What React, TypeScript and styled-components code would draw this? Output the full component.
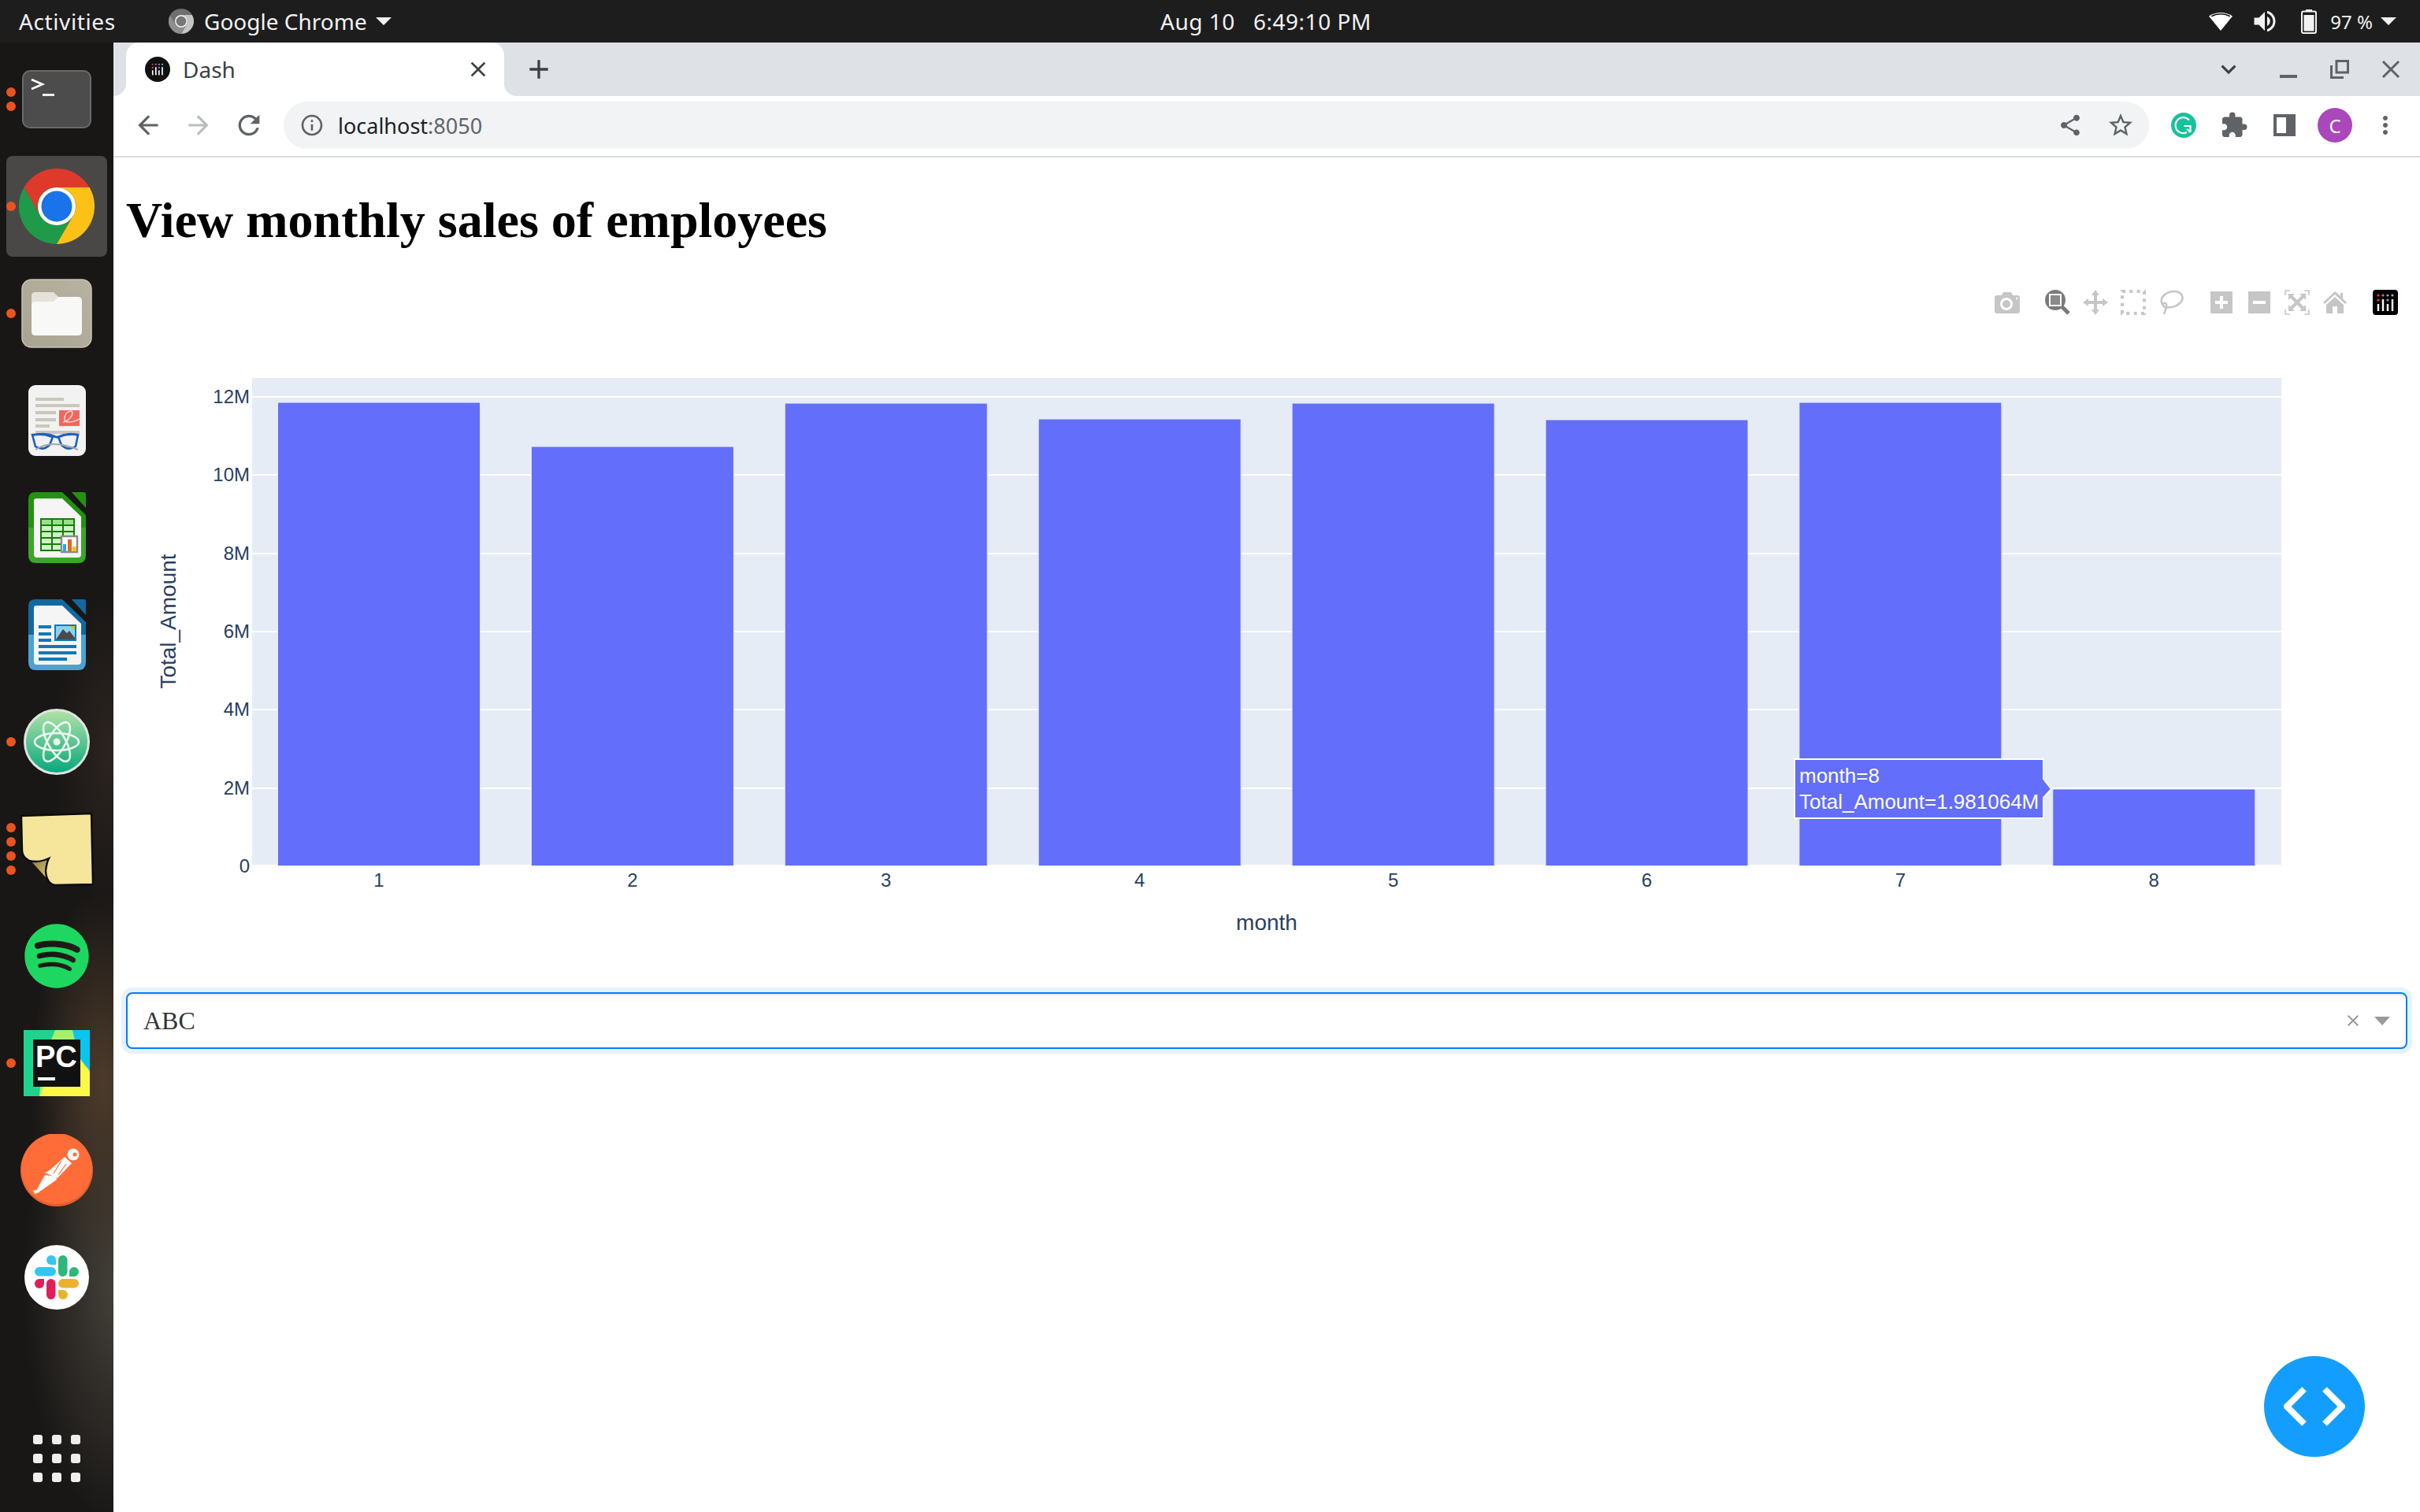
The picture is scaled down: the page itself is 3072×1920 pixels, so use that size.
import styled, { createGlobalStyle } from "styled-components";
import {
  MdAdd,
  MdArrowBack,
  MdArrowForward,
  MdClose,
  MdExtension,
  MdInfoOutline,
  MdKeyboardArrowDown,
  MdMoreVert,
  MdRefresh,
  MdShare,
  MdStarBorder,
  MdVolumeUp,
} from "react-icons/md";
import { FaSpotify } from "react-icons/fa";

const UI_FONT = '"Noto Sans", "Open Sans", sans-serif';
const PLOT_FONT = '"Liberation Sans", Arial, sans-serif';

const GlobalStyle = createGlobalStyle`
  html, body {
    margin: 0;
    padding: 0;
    background: #fff;
  }
  body {
    width: 3072px;
    height: 1920px;
    overflow: hidden;
    font-family: "Liberation Serif", serif;
  }
`;

const Screen = styled.div`
  position: relative;
  width: 3072px;
  height: 1920px;
  display: flex;
  flex-direction: column;
  overflow: hidden;
`;

/* ---------- gnome top bar ---------- */
const TopBar = styled.header`
  height: 54px;
  flex: none;
  display: grid;
  grid-template-columns: 214px 1259px 1fr;
  align-items: center;
  background: #1d1d1d;
  color: #f2f2f2;
  font-family: ${UI_FONT};
  font-size: 28px;
`;
const Activities = styled.div`
  padding-left: 24px;
  letter-spacing: 0.6px;
`;
const AppMenu = styled.div`
  display: flex;
  align-items: center;
  gap: 13px;
`;
const Caret = styled.span<{ $size: number }>`
  width: 0;
  height: 0;
  border-left: ${(p) => p.$size}px solid transparent;
  border-right: ${(p) => p.$size}px solid transparent;
  border-top: ${(p) => p.$size}px solid #f2f2f2;
  margin-left: -2px;
`;
const StatusRow = styled.div`
  display: flex;
  align-items: center;
`;
const Clock = styled.div`
  white-space: pre;
  letter-spacing: 0.5px;
`;
const Tray = styled.div`
  margin-left: auto;
  padding-right: 30px;
  display: flex;
  align-items: center;
`;
const TraySlot = styled.span<{ $gap: number }>`
  display: flex;
  margin-left: ${(p) => p.$gap}px;
`;
const Percent = styled.span`
  font-size: 24px;
  margin: 0 12px 0 17px;
`;

/* ---------- desktop ---------- */
const Desktop = styled.div`
  flex: 1;
  display: flex;
  min-height: 0;
`;
const Dock = styled.aside`
  width: 144px;
  flex: none;
  display: flex;
  flex-direction: column;
  padding: 4px 0 38px;
  box-sizing: border-box;
  background:
    radial-gradient(ellipse 90px 240px at 130px 1320px, #4d3b2b 0%, rgba(77, 59, 43, 0) 100%),
    radial-gradient(ellipse 120px 300px at 150px 1580px, #45413a 0%, rgba(69, 65, 58, 0) 100%),
    radial-gradient(ellipse 70px 200px at 140px 900px, #2c2420 0%, rgba(44, 36, 32, 0) 100%),
    #191716;
`;
const DockItem = styled.div<{ $active?: boolean }>`
  position: relative;
  height: 136px;
  flex: none;
  display: flex;
  align-items: center;
  justify-content: center;
  &::before {
    content: "";
    display: ${(p) => (p.$active ? "block" : "none")};
    position: absolute;
    left: 8px;
    right: 8px;
    top: 4px;
    bottom: 4px;
    border-radius: 8px;
    background: #4a4846;
  }
  svg {
    position: relative;
  }
`;
const RunningDots = styled.div`
  position: absolute;
  left: 8px;
  top: 0;
  bottom: 0;
  display: flex;
  flex-direction: column;
  justify-content: center;
  gap: 6px;
`;
const RunningDot = styled.span`
  width: 12px;
  height: 12px;
  border-radius: 50%;
  background: #e95420;
`;
const AppGrid = styled.div`
  margin-top: auto;
  align-self: center;
  display: grid;
  grid-template-columns: repeat(3, 12px);
  gap: 12px;
`;
const AppGridDot = styled.span`
  height: 12px;
  border-radius: 3px;
  background: #eeeeee;
`;

/* ---------- chrome ---------- */
const Browser = styled.main`
  flex: 1;
  min-width: 0;
  display: flex;
  flex-direction: column;
  background: #fff;
`;
const TabStrip = styled.div`
  height: 68px;
  flex: none;
  display: flex;
  align-items: center;
  padding-left: 16px;
  background: #dee1e6;
`;
const Tab = styled.div`
  position: relative;
  width: 480px;
  height: 68px;
  box-sizing: border-box;
  display: flex;
  align-items: center;
  padding: 0 17px 0 24px;
  gap: 16px;
  background: #fff;
  border-radius: 16px 16px 0 0;
  color: #3c4043;
  font-family: ${UI_FONT};
  font-size: 28px;
  &::before,
  &::after {
    content: "";
    position: absolute;
    bottom: 0;
    width: 16px;
    height: 16px;
  }
  &::before {
    left: -16px;
    background: radial-gradient(circle at 0 0, #dee1e6 15.5px, #fff 16.5px);
  }
  &::after {
    right: -16px;
    background: radial-gradient(circle at 100% 0, #dee1e6 15.5px, #fff 16.5px);
  }
`;
const TabClose = styled.span`
  margin-left: auto;
  display: flex;
  color: #3c4043;
`;
const NewTab = styled.span`
  margin-left: 24px;
  display: flex;
  color: #3c4043;
`;
const WindowControls = styled.div`
  margin-left: auto;
  padding-right: 5px;
  display: flex;
  align-items: center;
`;
const WindowButton = styled.span<{ $gapRight?: number }>`
  width: 65px;
  height: 68px;
  margin-right: ${(p) => p.$gapRight ?? 0}px;
  display: flex;
  align-items: center;
  justify-content: center;
  color: #5f6368;
`;
const MinimizeBar = styled.span`
  width: 22px;
  height: 4px;
  margin-top: 18px;
  background: #5f6368;
`;
const Toolbar = styled.div`
  height: 78px;
  flex: none;
  box-sizing: border-box;
  display: flex;
  align-items: center;
  padding: 0 0 2px 12px;
  background: #fff;
  border-bottom: 2px solid #dadce0;
`;
const NavButton = styled.span<{ $dim?: boolean }>`
  width: 64px;
  height: 60px;
  flex: none;
  display: flex;
  align-items: center;
  justify-content: center;
  color: ${(p) => (p.$dim ? "#babcbe" : "#5f6368")};
`;
const Omnibox = styled.div`
  width: 2368px;
  height: 60px;
  flex: none;
  margin: 0 12px;
  box-sizing: border-box;
  display: flex;
  align-items: center;
  padding: 0 4px 0 20px;
  border-radius: 30px;
  background: #f1f3f4;
  font-family: ${UI_FONT};
  font-size: 27px;
  color: #202124;
`;
const InfoIcon = styled.span`
  display: flex;
  color: #5f6368;
  margin-right: 17px;
`;
const Port = styled.span`
  color: #5f6368;
`;
const Url = styled.div`
  flex: 1;
`;
const Avatar = styled.span`
  width: 44px;
  height: 44px;
  border-radius: 50%;
  background: #ab47bc;
  color: #fff;
  font-family: ${UI_FONT};
  font-size: 24px;
  display: flex;
  align-items: center;
  justify-content: center;
`;
const SidePanel = styled.span`
  width: 28px;
  height: 28px;
  box-sizing: border-box;
  border: 4px solid #5f6368;
  border-right-width: 12px;
  background: #fff;
`;

/* ---------- page ---------- */
const Page = styled.section`
  flex: 1;
  padding: 0 16px;
`;
const Title = styled.h1`
  margin: 43px 0;
  font-family: "Liberation Serif", serif;
  font-size: 64px;
  font-weight: 700;
  color: #000;
`;
const Graph = styled.div`
  position: relative;
  height: 900px;
  svg.plot {
    display: block;
  }
`;
const ModeBar = styled.div`
  position: absolute;
  top: 8px;
  right: 4px;
  display: flex;
  gap: 16px;
`;
const ModeGroup = styled.div`
  display: flex;
`;
const ModeButton = styled.span`
  width: 48px;
  height: 32px;
  display: flex;
  align-items: center;
  justify-content: center;
`;
const Dropdown = styled.div`
  height: 72px;
  box-sizing: border-box;
  display: flex;
  align-items: center;
  padding: 0 20px;
  border: 2px solid #007eff;
  border-radius: 8px;
  box-shadow: inset 0 2px 2px rgba(0, 0, 0, 0.075), 0 0 0 6px rgba(0, 126, 255, 0.1);
  font-family: "Liberation Serif", serif;
  font-size: 32px;
  color: #333;
`;
const DropdownValue = styled.span`
  flex: 1;
`;
const ClearMark = styled.span`
  display: flex;
  color: #999;
  margin-right: 15px;
`;
const DropdownCaret = styled.span`
  width: 0;
  height: 0;
  border-left: 10px solid transparent;
  border-right: 10px solid transparent;
  border-top: 11px solid #999;
`;
const CodeFab = styled.div`
  position: absolute;
  left: 2874px;
  top: 1722px;
  width: 128px;
  height: 128px;
  border-radius: 50%;
  background: #139eff;
  display: flex;
  align-items: center;
  justify-content: center;
`;

/* ---------- icons ---------- */
function ChromeLogo({ size, colors }: { size: number; colors: [string, string, string, string] }) {
  return (
    <svg width={size} height={size} viewBox="0 0 96 96">
      <path d="M48 0A48 48 0 0 1 89.6 24L48 24A24 24 0 0 0 27.2 60L6.4 24A48 48 0 0 1 48 0Z" fill={colors[0]} />
      <path d="M6.4 24L27.2 60A24 24 0 0 0 68.8 60L48 96A48 48 0 0 1 6.4 24Z" fill={colors[1]} />
      <path d="M89.6 24A48 48 0 0 1 48 96L68.8 60A24 24 0 0 0 48 24Z" fill={colors[2]} />
      <circle cx="48" cy="48" r="24" fill="#fff" />
      <circle cx="48" cy="48" r="19.5" fill={colors[3]} />
    </svg>
  );
}

function PlotlyMarks() {
  const dots: [number, number, string][] = [
    [7, 7, "#ff2d6f"],
    [13, 7, "#c86ea5"],
    [19, 7, "#a98ccf"],
    [25, 7, "#5ecae9"],
    [7, 13, "#ff2d6f"],
    [19, 13, "#a98ccf"],
  ];
  return (
    <>
      {dots.map(([x, y, c]) => (
        <circle key={`${x}-${y}`} cx={x} cy={y} r="1.6" fill={c} />
      ))}
      <rect x="5.8" y="18" width="2.4" height="9" fill="#fff" />
      <rect x="11.8" y="12" width="2.4" height="15" fill="#fff" />
      <rect x="17.8" y="18" width="2.4" height="9" fill="#fff" />
      <rect x="23.8" y="12" width="2.4" height="15" fill="#fff" />
    </>
  );
}

function Favicon() {
  return (
    <svg width="32" height="32" viewBox="0 0 32 32">
      <circle cx="16" cy="16" r="16" fill="#111" />
      <g transform="translate(5 5) scale(.68)">
        <PlotlyMarks />
      </g>
    </svg>
  );
}

function WifiIcon() {
  return (
    <svg width="32" height="26" viewBox="0 0 32 26">
      <path d="M16 25L1 6.5C9.5 .5 22.5 .5 31 6.5Z" fill="#fff" />
      <path d="M4.2 6.8C11 2.8 21 2.8 27.8 6.8" fill="none" stroke="#1d1d1d" strokeWidth="1.6" />
    </svg>
  );
}

function BatteryIcon() {
  return (
    <svg width="20" height="31" viewBox="0 0 20 31">
      <rect x="6" y="0" width="8" height="3" fill="#eee" />
      <rect x="1" y="2.5" width="18" height="27.5" rx="2" fill="none" stroke="#f2f2f2" strokeWidth="2" />
      <rect x="3.5" y="7" width="13" height="20.5" fill="#f2f2f2" />
    </svg>
  );
}

function GrammarlyIcon() {
  return (
    <svg width="32" height="32" viewBox="0 0 32 32">
      <circle cx="16" cy="16" r="16" fill="#15c39a" />
      <path d="M23 9.5A10 10 0 1 0 20 25" fill="none" stroke="#fff" strokeWidth="2.2" />
      <path d="M16.5 17H24.5V25M24.5 25L20 20.8" fill="none" stroke="#fff" strokeWidth="2.2" />
    </svg>
  );
}

function TerminalIcon() {
  return (
    <svg width="88" height="74" viewBox="0 0 88 74">
      <rect x="1" y="1" width="86" height="72" rx="9" fill="#4c4c4c" stroke="#6a6a6a" strokeWidth="2" />
      <path d="M12 12L26 18L12 24" fill="none" stroke="#fff" strokeWidth="2.6" />
      <rect x="26" y="30" width="15" height="3" fill="#eee" />
    </svg>
  );
}

function FolderIcon() {
  return (
    <svg width="90" height="88" viewBox="0 0 90 88">
      <defs>
        <linearGradient id="folderBg" x1="0" y1="1" x2="1" y2="0">
          <stop offset="0" stopColor="#a9a391" />
          <stop offset="1" stopColor="#b8b2a2" />
        </linearGradient>
      </defs>
      <rect x="1" y="1" width="88" height="86" rx="12" fill="url(#folderBg)" stroke="#c8c3b6" strokeWidth="1.5" />
      <path d="M13 22Q13 17 18 17H41L47 23H60V40H13Z" fill="#e6e2d8" />
      <path d="M13 34Q13 29 18 29H41L47 23H72Q77 23 77 28V67Q77 72 72 72H18Q13 72 13 67Z" fill="#f8f8f7" />
    </svg>
  );
}

function EvinceIcon() {
  return (
    <svg width="73" height="90" viewBox="0 0 73 90">
      <rect x="0" y="0" width="73" height="90" rx="9" fill="#f2f2f2" />
      <g fill="#cbc7ba">
        <rect x="9" y="16" width="36" height="4" />
        <rect x="9" y="24" width="56" height="4" />
        <rect x="9" y="33" width="26" height="4" />
        <rect x="9" y="42" width="26" height="4" />
        <rect x="9" y="50" width="18" height="4" />
        <rect x="9" y="58" width="56" height="4" />
      </g>
      <rect x="39" y="32" width="26" height="20" fill="#f4665c" />
      <path d="M44 47C52 46 60 34 54 33C47 33 42 46 50 47C55 47 60 46 65 43" fill="none" stroke="#fff" strokeWidth="1.2" />
      <path d="M6 64C16 61 28 62 35 66H38C45 62 57 61 63 64" fill="none" stroke="#1f5fbf" strokeWidth="3" />
      <path d="M5 63L9 78Q19 84 27 76L31 66Q18 61 5 63ZM38 66L42 76Q50 84 60 78L63 63Q50 61 38 66Z" fill="#eef0f2" fillOpacity=".55" stroke="#1f5fbf" strokeWidth="2.6" />
      <path d="M9 82Q30 68 63 82" fill="none" stroke="#a8a8a8" strokeWidth="2" />
    </svg>
  );
}

function OfficeDoc({ id, dark, light, children }: { id: string; dark: string; light: string; children: React.ReactNode }) {
  return (
    <svg width="73" height="90" viewBox="0 0 73 90">
      <defs>
        <linearGradient id={id} x1="0" y1="0" x2="0" y2="1">
          <stop offset=".5" stopColor={dark} />
          <stop offset=".5" stopColor={light} />
        </linearGradient>
      </defs>
      <path d="M9 0H43L73 29V80Q73 90 63 90H10Q0 90 0 80V9Q0 0 9 0Z" fill={`url(#${id})`} />
      <path d="M55 0H70Q73 0 73 3V20Z" fill={dark} />
      <path d="M10 8H43L67 31V79Q67 83 63 83H11Q7 83 7 79V11Q7 8 10 8Z" fill="#f5f5f5" />
      {children}
    </svg>
  );
}

function CalcIcon() {
  const rows = [0, 1, 2, 3, 4];
  const cols = [0, 1, 2];
  return (
    <OfficeDoc id="calcDoc" dark="#23930f" light="#3aa62a">
      <rect x="15" y="33" width="44" height="42" fill="#1a7a0d" />
      {rows.map((r) =>
        cols.map((c) => (
          <rect
            key={`${r}-${c}`}
            x={17 + c * 14}
            y={35 + r * 8}
            width="12"
            height="6"
            fill={r === 0 ? "#97e286" : "#cdf4c4"}
          />
        )),
      )}
      <rect x="42" y="56" width="20" height="20" fill="#fff" stroke="#8a8a8a" strokeWidth="2.4" />
      <rect x="44" y="66" width="4" height="9" fill="#2aa5ee" />
      <rect x="50" y="60" width="5" height="15" fill="#dd6a20" />
      <rect x="56" y="69" width="5" height="6" fill="#f2c21b" />
    </OfficeDoc>
  );
}

function WriterIcon() {
  return (
    <OfficeDoc id="writerDoc" dark="#12699f" light="#4aa3d2">
      <g fill="#1278b5">
        <rect x="13" y="33" width="16" height="4" />
        <rect x="13" y="42" width="16" height="4" />
        <rect x="13" y="50" width="16" height="4" />
        <rect x="13" y="58" width="48" height="4" />
        <rect x="13" y="66" width="48" height="4" />
        <rect x="13" y="74" width="36" height="4" />
      </g>
      <rect x="33" y="32" width="28" height="21" fill="#1278b5" />
      <rect x="35" y="34" width="24" height="17" fill="#8fd0ee" />
      <path d="M35 51L44 38L49 43L52 40L59 49V51Z" fill="#4b4b4b" />
      <path d="M53 34H59V40Z" fill="#eab80f" />
    </OfficeDoc>
  );
}

function AtomIcon() {
  const spins = [0, 60, 120];
  return (
    <svg width="84" height="84" viewBox="0 0 84 84">
      <defs>
        <linearGradient id="atomBg" x1="0" y1="0" x2="0" y2="1">
          <stop offset="0" stopColor="#b4e2a8" />
          <stop offset="1" stopColor="#03a87c" />
        </linearGradient>
      </defs>
      <circle cx="42" cy="42" r="40.5" fill="url(#atomBg)" stroke="#dfe4e0" strokeWidth="3" />
      {spins.map((a) => (
        <ellipse key={a} cx="42" cy="42" rx="28" ry="11" fill="none" stroke="#e9f7ee" strokeWidth="2.6" transform={`rotate(${a} 42 42)`} />
      ))}
      <circle cx="42" cy="42" r="4.5" fill="#e9f7ee" />
    </svg>
  );
}

function StickyIcon() {
  return (
    <svg width="94" height="93" viewBox="0 0 94 93">
      <defs>
        <linearGradient id="stickyFold" x1="0" y1="0" x2="1" y2="1">
          <stop offset="0" stopColor="#8a7a3a" />
          <stop offset="1" stopColor="#d8c471" />
        </linearGradient>
      </defs>
      <path d="M14 61L36 58L33 82Z" fill="url(#stickyFold)" />
      <path
        d="M2 4L91 1L93 91L45 92Q34 90 33 74Q34 64 37 58Q24 64 12 61Q3 56 3 48Z"
        fill="#f5e69b"
        stroke="#0c0c0c"
        strokeWidth="2.4"
      />
    </svg>
  );
}

function SpotifyIcon() {
  return <FaSpotify size={84} color="#1ed760" />;
}

function PyCharmIcon() {
  return (
    <svg width="84" height="84" viewBox="0 0 84 84">
      <rect width="84" height="84" fill="#1fd38f" />
      <path d="M40 0H64L74 40L60 84H20L24 40Z" fill="#a6ef6c" />
      <path d="M62 0H84V52L70 34Z" fill="#0bc5ee" />
      <path d="M20 84L26 72L66 30L84 52V84Z" fill="#fbf847" />
      <rect x="12" y="12" width="60" height="60" fill="#111" />
      <text x="15" y="47" fontFamily={PLOT_FONT} fontWeight="700" fontSize="38" fill="#fff">
        PC
      </text>
      <rect x="18" y="60" width="22" height="4" fill="#fff" />
    </svg>
  );
}

function PostmanIcon() {
  return (
    <svg width="92" height="92" viewBox="0 0 92 92">
      <circle cx="46" cy="46" r="46" fill="#e55f2f" />
      <circle cx="46" cy="44" r="45" fill="#ff6c37" />
      <circle cx="67" cy="26" r="7.5" fill="#fff" />
      <circle cx="69" cy="26" r="2.5" fill="#ff6c37" />
      <path d="M56 29L65 37L47 56L31 49L37 46Z" fill="#fff" />
      <path d="M31 52L45 54L46 58L26 72L20 72Z" fill="#fff" />
      <path d="M16 72L26 70L24 74L18 76Z" fill="#fff" />
      <path d="M52 34L42 50M58 38L48 52" stroke="#ff6c37" strokeWidth="1.2" />
    </svg>
  );
}

function SlackIcon() {
  return (
    <svg width="82" height="82" viewBox="0 0 82 82">
      <circle cx="41" cy="41" r="41" fill="#fff" />
      <rect x="13" y="28" width="27" height="11.5" rx="5.75" fill="#36c5f0" />
      <path d="M40 25H34A6 6 0 1 1 40 19Z" fill="#36c5f0" />
      <rect x="43" y="13" width="11.5" height="27" rx="5.75" fill="#2eb67d" />
      <path d="M57 40V34A6 6 0 1 1 63 40Z" fill="#2eb67d" />
      <rect x="28" y="43" width="11.5" height="26" rx="5.75" fill="#e01e5a" />
      <path d="M25 43V49A6 6 0 1 1 19 43Z" fill="#e01e5a" />
      <rect x="43" y="43" width="26" height="11.5" rx="5.75" fill="#ecb22e" />
      <path d="M43 57H49A6 6 0 1 1 43 63Z" fill="#ecb22e" />
    </svg>
  );
}

const MODE_ICON = "#c6c6c6";

function CameraIcon() {
  return (
    <svg width="32" height="28" viewBox="0 0 32 28">
      <path d="M3 5H9L11 1H21L23 5H29Q32 5 32 8V25Q32 28 29 28H3Q0 28 0 25V8Q0 5 3 5Z" fill={MODE_ICON} />
      <circle cx="15" cy="16" r="6.5" fill="none" stroke="#fff" strokeWidth="3" />
      <circle cx="28" cy="9" r="1.2" fill="#fff" />
    </svg>
  );
}
function ZoomIcon() {
  return (
    <svg width="32" height="32" viewBox="0 0 32 32">
      <circle cx="13" cy="13" r="13" fill="#7a7a7a" />
      <rect x="6" y="6" width="14" height="14" fill="#8a8a8a" stroke="#fff" strokeWidth="2" />
      <path d="M21 21L30 30" stroke="#7a7a7a" strokeWidth="5" />
    </svg>
  );
}
function PanIcon() {
  return (
    <svg width="32" height="32" viewBox="0 0 32 32">
      <path d="M16 0L21 7H18V14H25V11L32 16L25 21V18H18V25H21L16 32L11 25H14V18H7V21L0 16L7 11V14H14V7H11Z" fill={MODE_ICON} />
    </svg>
  );
}
function SelectIcon() {
  return (
    <svg width="32" height="32" viewBox="0 0 32 32">
      <rect x="2" y="2" width="28" height="28" fill="none" stroke={MODE_ICON} strokeWidth="4" strokeDasharray="4 5.33" />
    </svg>
  );
}
function LassoIcon() {
  return (
    <svg width="32" height="32" viewBox="0 0 32 32">
      <path d="M6 20C-1 10 10 2 20 2C28 2 32 8 30 13C27 20 16 24 8 22C4 20 6 16 9 17C12 19 9 26 7 31" fill="none" stroke={MODE_ICON} strokeWidth="2.6" />
    </svg>
  );
}
function BoxIcon({ plus }: { plus?: boolean }) {
  return (
    <svg width="28" height="28" viewBox="0 0 28 28">
      <rect width="28" height="28" fill={MODE_ICON} />
      <rect x="6" y="12" width="16" height="4" fill="#fff" />
      {plus && <rect x="12" y="6" width="4" height="16" fill="#fff" />}
    </svg>
  );
}
function AutoscaleIcon() {
  return (
    <svg width="32" height="32" viewBox="0 0 32 32">
      <path d="M1 7V1H7M25 1H31V7M31 25V31H25M7 31H1V25" fill="none" stroke={MODE_ICON} strokeWidth="1.6" />
      <path d="M7 7L25 25M25 7L7 25" stroke={MODE_ICON} strokeWidth="4" />
      <path d="M5 5H13L5 13ZM27 5V13L19 5ZM27 27H19L27 19ZM5 27V19L13 27Z" fill={MODE_ICON} />
    </svg>
  );
}
function HomeIcon() {
  return (
    <svg width="30" height="28" viewBox="0 0 30 28">
      <path d="M15 0L22 6V2H25V9L30 14L28 16L15 4L2 16L0 14Z" fill={MODE_ICON} />
      <path d="M15 7L26 17V28H18V19H12V28H4V17Z" fill={MODE_ICON} />
    </svg>
  );
}
function PlotlyLogo() {
  return (
    <svg width="32" height="32" viewBox="0 0 32 32">
      <rect width="32" height="32" rx="4" fill="#000" />
      <PlotlyMarks />
    </svg>
  );
}

/* ---------- chart ---------- */
const plot = { left: 320, right: 2896, top: 480, bottom: 1099 };
const barTops = [511, 567, 512, 532, 512, 533, 511, 1002];
const yTicks = [
  { label: "12M", y: 504 },
  { label: "10M", y: 603 },
  { label: "8M", y: 703 },
  { label: "6M", y: 802 },
  { label: "4M", y: 901 },
  { label: "2M", y: 1001 },
];
const AXIS_COLOR = "#2a3f5f";

function BarChart() {
  return (
    <svg className="plot" width="2896" height="900" viewBox="160 360 2896 900" fontFamily={PLOT_FONT}>
      <rect x={plot.left} y={plot.top} width={plot.right - plot.left} height={plot.bottom - plot.top} fill="#e5ecf6" />
      {yTicks.map((t) => (
        <g key={t.label}>
          <rect x={plot.left} y={t.y - 1} width={plot.right - plot.left} height="2" fill="#fff" />
          <text x="317" y={t.y + 8} textAnchor="end" fontSize="24" fill={AXIS_COLOR}>
            {t.label}
          </text>
        </g>
      ))}
      <rect x={plot.left} y={plot.bottom - 1} width={plot.right - plot.left} height="3" fill="#fff" />
      <text x="317" y="1108" textAnchor="end" fontSize="24" fill={AXIS_COLOR}>
        0
      </text>
      {barTops.map((top, i) => {
        const x = 352.5 + i * 321.9;
        return (
          <g key={i}>
            <rect x={x} y={top} width="257" height={plot.bottom + 0.5 - top} fill="#636efa" stroke="#e5ecf6" strokeWidth="1" />
            <text x={x + 128.5} y="1126" textAnchor="middle" fontSize="24" fill={AXIS_COLOR}>
              {i + 1}
            </text>
          </g>
        );
      })}
      <text x="1608" y="1181" textAnchor="middle" fontSize="28" fill={AXIS_COLOR}>
        month
      </text>
      <text transform="translate(223 789) rotate(-90)" textAnchor="middle" fontSize="28" fill={AXIS_COLOR}>
        Total_Amount
      </text>
      <path
        d="M2278 964H2594V989L2604 1002L2594 1013V1039H2278Z"
        fill="#636efa"
        stroke="#fff"
        strokeWidth="2"
      />
      <text x="2284" y="994" fontSize="26" fill="#fff">
        month=8
      </text>
      <text x="2284" y="1027" fontSize="26" fill="#fff">
        Total_Amount=1.981064M
      </text>
    </svg>
  );
}

const dockApps = [
  { key: "terminal", icon: <TerminalIcon />, dots: 2 },
  {
    key: "chrome",
    icon: <ChromeLogo size={96} colors={["#dd3a2b", "#1f9a48", "#fcc016", "#1a73e8"]} />,
    dots: 1,
    active: true,
  },
  { key: "files", icon: <FolderIcon />, dots: 1 },
  { key: "evince", icon: <EvinceIcon />, dots: 0 },
  { key: "calc", icon: <CalcIcon />, dots: 0 },
  { key: "writer", icon: <WriterIcon />, dots: 0 },
  { key: "atom", icon: <AtomIcon />, dots: 1 },
  { key: "sticky", icon: <StickyIcon />, dots: 4 },
  { key: "spotify", icon: <SpotifyIcon />, dots: 0 },
  { key: "pycharm", icon: <PyCharmIcon />, dots: 1 },
  { key: "postman", icon: <PostmanIcon />, dots: 0 },
  { key: "slack", icon: <SlackIcon />, dots: 0 },
];

export default function App() {
  return (
    <Screen>
      <GlobalStyle />
      <TopBar>
        <Activities>Activities</Activities>
        <AppMenu>
          <ChromeLogo size={32} colors={["#6f6f6f", "#8e8e8e", "#c4c4c4", "#777"]} />
          <span>Google Chrome</span>
          <Caret $size={10} />
        </AppMenu>
        <StatusRow>
          <Clock>Aug 10   6:49:10 PM</Clock>
          <Tray>
            <WifiIcon />
            <TraySlot $gap={22}>
              <MdVolumeUp size={36} color="#f2f2f2" />
            </TraySlot>
            <TraySlot $gap={28}>
              <BatteryIcon />
            </TraySlot>
            <Percent>97 %</Percent>
            <Caret $size={10} />
          </Tray>
        </StatusRow>
      </TopBar>
      <Desktop>
        <Dock>
          {dockApps.map((app) => (
            <DockItem key={app.key} $active={app.active}>
              {app.dots > 0 && (
                <RunningDots>
                  {Array.from({ length: app.dots }, (_, i) => (
                    <RunningDot key={i} />
                  ))}
                </RunningDots>
              )}
              {app.icon}
            </DockItem>
          ))}
          <AppGrid>
            {Array.from({ length: 9 }, (_, i) => (
              <AppGridDot key={i} />
            ))}
          </AppGrid>
        </Dock>
        <Browser>
          <TabStrip>
            <Tab>
              <Favicon />
              <span>Dash</span>
              <TabClose>
                <MdClose size={32} />
              </TabClose>
            </Tab>
            <NewTab>
              <MdAdd size={40} />
            </NewTab>
            <WindowControls>
              <WindowButton $gapRight={11}>
                <MdKeyboardArrowDown size={38} color="#3c4043" />
              </WindowButton>
              <WindowButton>
                <MinimizeBar />
              </WindowButton>
              <WindowButton>
                <svg width="24" height="24" viewBox="0 0 24 24">
                  <path d="M1.5 7V22.5H17" fill="none" stroke="#5f6368" strokeWidth="3" />
                  <rect x="8" y="1.5" width="14.5" height="14.5" fill="none" stroke="#5f6368" strokeWidth="3" />
                </svg>
              </WindowButton>
              <WindowButton>
                <svg width="24" height="24" viewBox="0 0 24 24">
                  <path d="M2 2L22 22M22 2L2 22" stroke="#5f6368" strokeWidth="3" />
                </svg>
              </WindowButton>
            </WindowControls>
          </TabStrip>
          <Toolbar>
            <NavButton>
              <MdArrowBack size={38} />
            </NavButton>
            <NavButton $dim>
              <MdArrowForward size={38} />
            </NavButton>
            <NavButton>
              <MdRefresh size={40} />
            </NavButton>
            <Omnibox>
              <InfoIcon>
                <MdInfoOutline size={32} />
              </InfoIcon>
              <Url>
                localhost<Port>:8050</Port>
              </Url>
              <NavButton>
                <MdShare size={32} />
              </NavButton>
              <NavButton>
                <MdStarBorder size={36} />
              </NavButton>
            </Omnibox>
            <NavButton>
              <GrammarlyIcon />
            </NavButton>
            <NavButton>
              <MdExtension size={36} />
            </NavButton>
            <NavButton>
              <SidePanel />
            </NavButton>
            <NavButton>
              <Avatar>C</Avatar>
            </NavButton>
            <NavButton>
              <MdMoreVert size={36} />
            </NavButton>
          </Toolbar>
          <Page>
            <Title>View monthly sales of employees</Title>
            <Graph>
              <BarChart />
              <ModeBar>
                <ModeGroup>
                  <ModeButton>
                    <CameraIcon />
                  </ModeButton>
                </ModeGroup>
                <ModeGroup>
                  <ModeButton>
                    <ZoomIcon />
                  </ModeButton>
                  <ModeButton>
                    <PanIcon />
                  </ModeButton>
                  <ModeButton>
                    <SelectIcon />
                  </ModeButton>
                  <ModeButton>
                    <LassoIcon />
                  </ModeButton>
                </ModeGroup>
                <ModeGroup>
                  <ModeButton>
                    <BoxIcon plus />
                  </ModeButton>
                  <ModeButton>
                    <BoxIcon />
                  </ModeButton>
                  <ModeButton>
                    <AutoscaleIcon />
                  </ModeButton>
                  <ModeButton>
                    <HomeIcon />
                  </ModeButton>
                </ModeGroup>
                <ModeGroup>
                  <ModeButton>
                    <PlotlyLogo />
                  </ModeButton>
                </ModeGroup>
              </ModeBar>
            </Graph>
            <Dropdown>
              <DropdownValue>ABC</DropdownValue>
              <ClearMark>
                <MdClose size={24} />
              </ClearMark>
              <DropdownCaret />
            </Dropdown>
          </Page>
        </Browser>
      </Desktop>
      <CodeFab>
        <svg width="78" height="50" viewBox="0 0 78 50">
          <path d="M26 3L4 25L26 47M52 3L74 25L52 47" fill="none" stroke="#fff" strokeWidth="8" />
        </svg>
      </CodeFab>
    </Screen>
  );
}
